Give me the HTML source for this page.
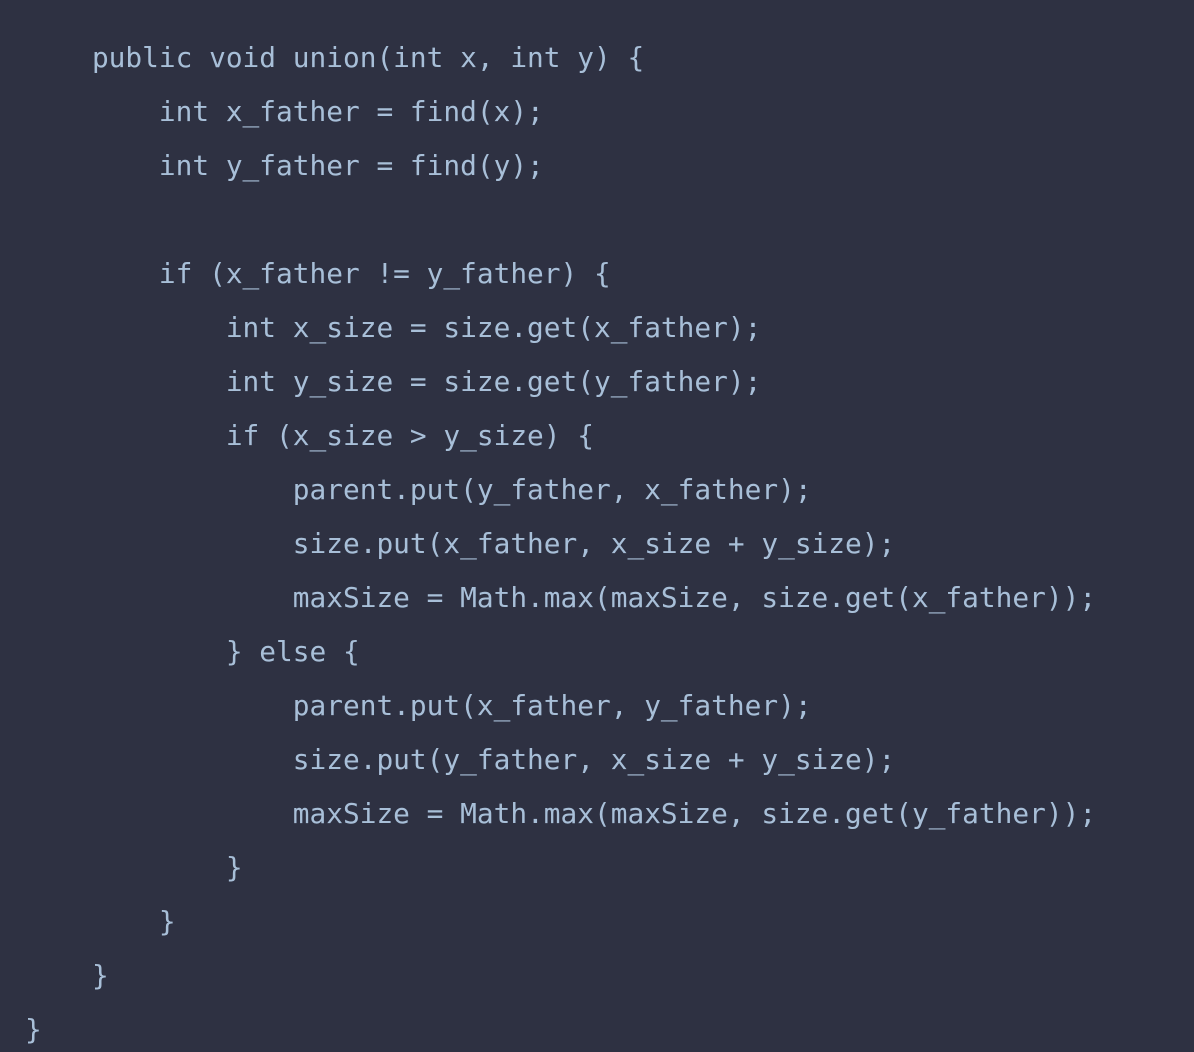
<!DOCTYPE html>
<html><head><meta charset="utf-8"><style>
html,body{margin:0;padding:0;background:#2e3142;width:1194px;height:1052px;overflow:hidden}
pre{margin:0;padding:31px 0 0 25px;font-family:"DejaVu Sans Mono","Liberation Mono",monospace;font-size:27.8px;line-height:54px;color:#a8bfd8;white-space:pre}
</style></head><body><pre>    public void union(int x, int y) {
        int x_father = find(x);
        int y_father = find(y);

        if (x_father != y_father) {
            int x_size = size.get(x_father);
            int y_size = size.get(y_father);
            if (x_size &gt; y_size) {
                parent.put(y_father, x_father);
                size.put(x_father, x_size + y_size);
                maxSize = Math.max(maxSize, size.get(x_father));
            } else {
                parent.put(x_father, y_father);
                size.put(y_father, x_size + y_size);
                maxSize = Math.max(maxSize, size.get(y_father));
            }
        }
    }
}</pre></body></html>
